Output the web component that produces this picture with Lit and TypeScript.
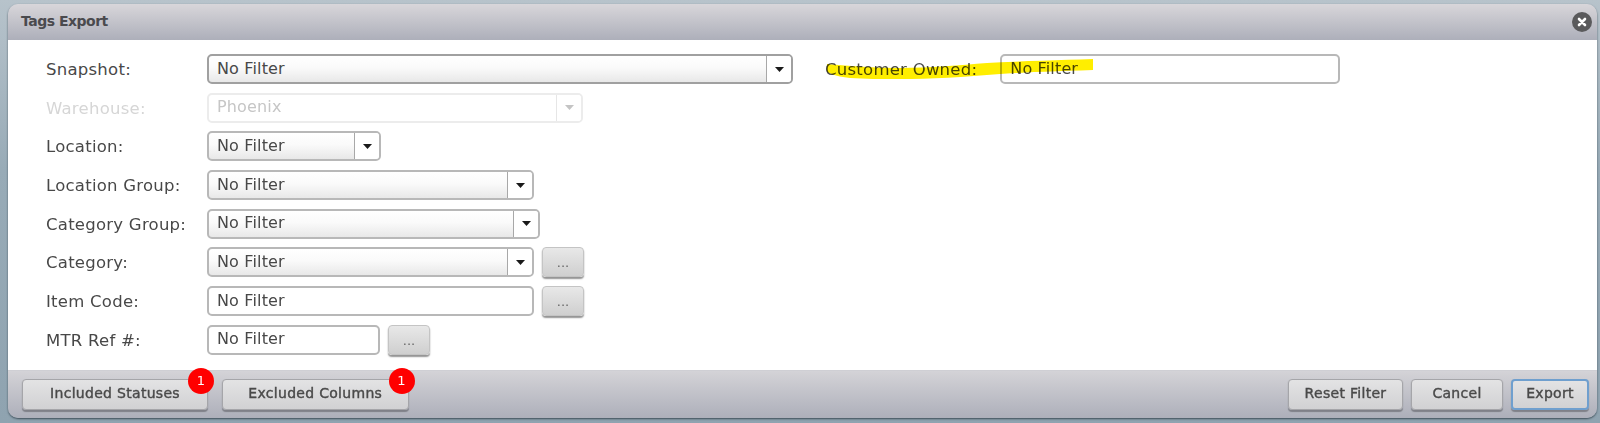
import { LitElement, html, css, nothing } from "lit";
import { customElement } from "lit/decorators.js";

const arrow = (dis = false) => html`<svg class="tri" width="9" height="5" viewBox="0 0 9 5"><path d="M0 0H9L4.5 5Z" fill=${dis ? "#c4c4c4" : "#1a1a1a"}></path></svg>`;

@customElement("app-root")
export class AppRoot extends LitElement {
  static styles = css`
    :host { display: block; width: 1600px; height: 423px; overflow: hidden; position: relative;
      background: linear-gradient(180deg, #b7c3cb 0%, #98abb7 40%, #8fa3b0 100%);
      font-family: "DejaVu Sans", sans-serif; font-size: 16px; color: #484848; }
    .win { position: absolute; left: 8px; top: 4px; width: 1589px; height: 414px; border-radius: 10px; overflow: hidden;
      display: flex; flex-direction: column; box-shadow: 0 1px 2px rgba(40,55,65,.8); filter: blur(.5px); }
    .title { height: 36px; flex: none; display: flex; align-items: center; justify-content: space-between;
      padding: 0 5px 0 13px; background: linear-gradient(180deg, #d8d6da 0%, #adafba 100%);
      font-weight: 700; font-size: 14px; color: #4a4a4e; letter-spacing: -.5px; }
    .title-text { margin-bottom: 2px; }
    .close { width: 20px; height: 20px; border-radius: 50%; background: #5a5a5c; display: flex; align-items: center; justify-content: center; }
    .body { flex: 1; background: #fff; display: flex; align-items: flex-start; padding: 14px 0 0 38px; gap: 32px; }
    .form { display: grid; grid-template-columns: 161px auto; row-gap: 8.7px; align-items: center; }
    .label { white-space: nowrap; font-size: 16.5px; letter-spacing: .25px; padding-top: 1px; }
    .label.dis { color: #d6d6d6; }
    .ctl { display: flex; gap: 8px; align-items: center; }
    .box { height: 30px; box-sizing: border-box; border: 2px solid #b8b8b8; border-radius: 5px; display: flex; align-items: center;
      padding-left: 8px; padding-bottom: 2px; background: #fff; color: #484848; white-space: nowrap; letter-spacing: .15px; }
    .sel { background: linear-gradient(180deg, #fff 0%, #fafafa 45%, #e8e8e8 100%); padding: 0; }
    .sel .txt { flex: 1; padding-left: 8px; padding-bottom: 2px; }
    .sel .drop { width: 24px; height: 100%; border-left: 1px solid #a8a8a8; display: flex; align-items: center; justify-content: center; background: #fff; border-radius: 0 3px 3px 0; }
    .box.strong { border-color: #a0a0a0; }
    .box.dis { border-color: #ececec; color: #c6c6c6; background: #fff; }
    .box.dis .drop { border-left-color: #e6e6e6; }
    .more { width: 42px; height: 30px; box-sizing: border-box; border: 1px solid #c4c4c4; border-radius: 4px; background: linear-gradient(180deg, #e8e8e8, #cfcfcf);
      box-shadow: 0 2px 1.5px #949494; color: #666; font-size: 13px; display: flex; align-items: flex-end; justify-content: center; padding-bottom: 7px; line-height: 1; }
    .side { display: flex; align-items: center; gap: 23px; }
    .foot { height: 48px; flex: none; border-top: 1px solid #cfcfd4; display: flex; align-items: center; justify-content: space-between; padding: 0 8px 1px 14px; box-sizing: border-box;
      background: linear-gradient(180deg, #d4d3d7 0%, #adafba 100%); }
    .group { display: flex; gap: 14px; }
    .group.r { gap: 8px; }
    .btn { position: relative; height: 31px; box-sizing: border-box; border: 1px solid #a5a5a9; border-radius: 4px; background: linear-gradient(180deg, #e3e3e4, #d1d1d3);
      box-shadow: 0 1.5px 1px #7f8088; display: flex; align-items: center; justify-content: center; padding-bottom: 2px; font-size: 14px; font-weight: 400; -webkit-text-stroke: .4px #4a4a4a; color: #4a4a4a; letter-spacing: .3px; }
    .btn.focus { border: 2px solid #6f9fce; }
    .badge { position: absolute; right: -7px; top: -12px; width: 26px; height: 26px; border-radius: 50%; background: #ff0000; color: #fff; font-size: 13px; letter-spacing: 0; -webkit-text-stroke: 0; display: flex; align-items: center; justify-content: center; }
    .mark { position: absolute; left: 825px; top: 55px; mix-blend-mode: multiply; pointer-events: none; filter: blur(.5px); }
  `;

  private select(text: string, w: number, dis = false, strong = false) {
    return html`<div class="box sel ${dis ? "dis" : ""} ${strong ? "strong" : ""}" style="width:${w}px"><span class="txt">${text}</span><span class="drop">${arrow(dis)}</span></div>`;
  }
  private input(w: number) {
    return html`<div class="box" style="width:${w}px">No Filter</div>`;
  }
  private btn(text: string, w: number, badge = false, focus = false) {
    return html`<div class="btn ${focus ? "focus" : ""}" style="width:${w}px">${text}${badge ? html`<span class="badge">1</span>` : nothing}</div>`;
  }

  render() {
    const more = html`<div class="more">...</div>`;
    return html`
      <div class="win">
        <div class="title"><span class="title-text">Tags Export</span>
          <span class="close"><svg width="10" height="10" viewBox="0 0 10 10"><path d="M2 2L8 8M8 2L2 8" stroke="#fff" stroke-width="2.6" stroke-linecap="round"></path></svg></span>
        </div>
        <div class="body">
          <div class="form">
            <div class="label">Snapshot:</div><div class="ctl">${this.select("No Filter", 586, false, true)}</div>
            <div class="label dis">Warehouse:</div><div class="ctl">${this.select("Phoenix", 376, true)}</div>
            <div class="label">Location:</div><div class="ctl">${this.select("No Filter", 174)}</div>
            <div class="label">Location Group:</div><div class="ctl">${this.select("No Filter", 327)}</div>
            <div class="label">Category Group:</div><div class="ctl">${this.select("No Filter", 333)}</div>
            <div class="label">Category:</div><div class="ctl">${this.select("No Filter", 327)}${more}</div>
            <div class="label">Item Code:</div><div class="ctl">${this.input(327)}${more}</div>
            <div class="label">MTR Ref #:</div><div class="ctl">${this.input(173)}${more}</div>
          </div>
          <div class="side"><div class="label">Customer Owned:</div>${this.input(340)}</div>
        </div>
        <div class="foot">
          <div class="group">${this.btn("Included Statuses", 186, true)}${this.btn("Excluded Columns", 186.5, true)}</div>
          <div class="group r">${this.btn("Reset Filter", 115)}${this.btn("Cancel", 92)}${this.btn("Export", 78, false, true)}</div>
        </div>
      </div>
      <svg class="mark" width="270" height="28" viewBox="0 0 270 28"><path d="M2 9C25 11 50 13 75 13C105 13 135 10 162 8C200 6 235 5 268 4L268 15C235 16 205 17 175 19C140 22 105 24 75 24C55 24 40 24 25 23C15 22 8 20 2 17Z" fill="#ffee00"></path></svg>
    `;
  }
}
